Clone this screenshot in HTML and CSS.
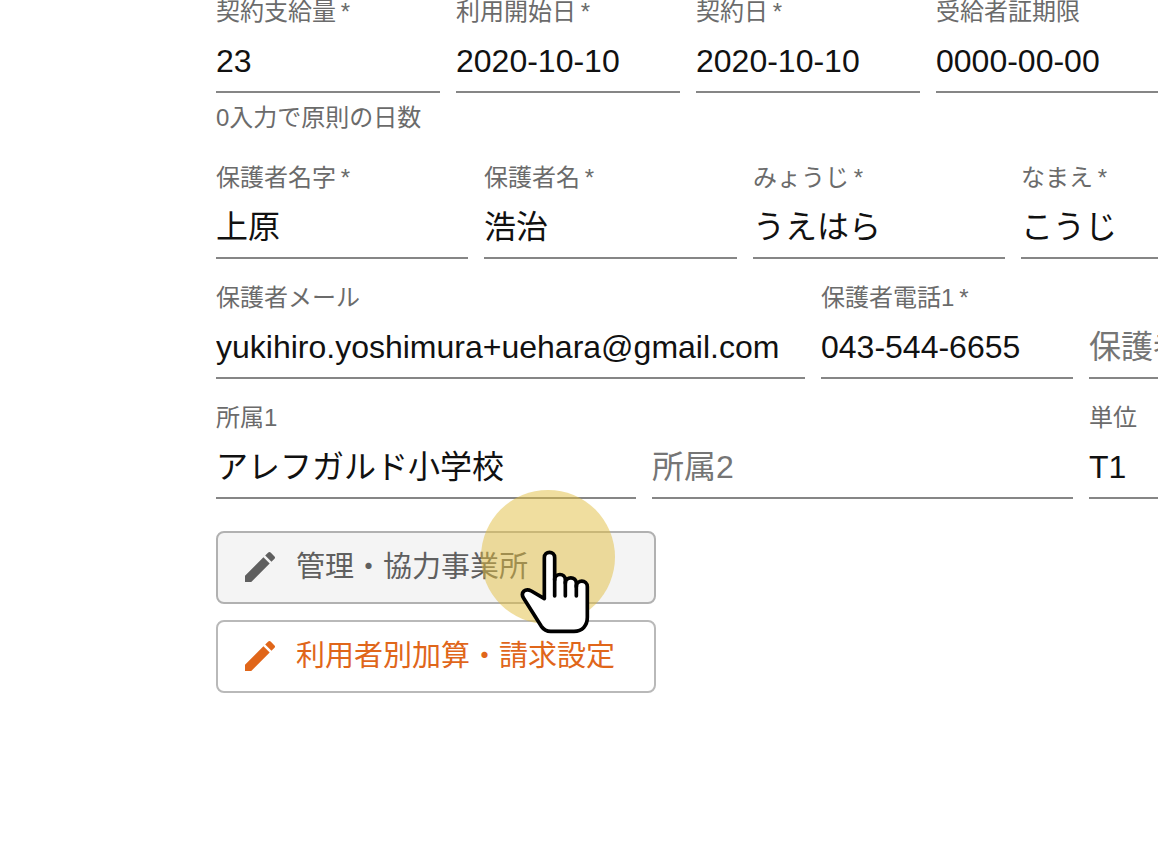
FILE: index.html
```html
<!DOCTYPE html>
<html lang="ja">
<head>
    <meta charset="UTF-8">
    <meta name="viewport" content="width=device-width, initial-scale=1.0">
    <title>利用者情報</title>
    <link rel="stylesheet" href="styles.css">
</head>
<body>
    <form class="user-form">
        <div class="row row-contract">
            <div class="field">
                <label for="volume">契約支給量&thinsp;*</label>
                <input type="text" id="volume" value="23">
                <p class="helper">0入力で原則の日数</p>
            </div>
            <div class="field">
                <label for="start-date">利用開始日&thinsp;*</label>
                <input type="text" id="start-date" value="2020-10-10">
            </div>
            <div class="field">
                <label for="contract-date">契約日&thinsp;*</label>
                <input type="text" id="contract-date" value="2020-10-10">
            </div>
            <div class="field">
                <label for="expire-date">受給者証期限</label>
                <input type="text" id="expire-date" value="0000-00-00">
            </div>
        </div>

        <div class="row row-guardian">
            <div class="field">
                <label for="last-name">保護者名字&thinsp;*</label>
                <input type="text" id="last-name" class="kanji" value="上原">
            </div>
            <div class="field">
                <label for="first-name">保護者名&thinsp;*</label>
                <input type="text" id="first-name" class="kanji" value="浩治">
            </div>
            <div class="field">
                <label for="last-kana">みょうじ&thinsp;*</label>
                <input type="text" id="last-kana" class="kanji" value="うえはら">
            </div>
            <div class="field">
                <label for="first-kana">なまえ&thinsp;*</label>
                <input type="text" id="first-kana" class="kanji" value="こうじ">
            </div>
        </div>

        <div class="row row-contact">
            <div class="field">
                <label for="mail">保護者メール</label>
                <input type="text" id="mail" value="yukihiro.yoshimura+uehara@gmail.com">
            </div>
            <div class="field">
                <label for="tel1">保護者電話1&thinsp;*</label>
                <input type="text" id="tel1" value="043-544-6655">
            </div>
            <div class="field field-empty">
                <input type="text" id="tel2" placeholder="保護者電話2" aria-label="保護者電話2">
            </div>
        </div>

        <div class="row row-belongs">
            <div class="field">
                <label for="belongs1">所属1</label>
                <input type="text" id="belongs1" class="kanji" value="アレフガルド小学校">
            </div>
            <div class="field field-empty">
                <input type="text" id="belongs2" placeholder="所属2" aria-label="所属2">
            </div>
            <div class="field">
                <label for="unit">単位</label>
                <input type="text" id="unit" value="T1">
            </div>
        </div>

        <div class="actions">
            <button type="button" class="btn btn-active">
                <svg class="icon" viewBox="0 0 24 24"><path d="M3 17.25V21h3.75L17.81 9.94l-3.75-3.75L3 17.25zM20.71 7.04c.39-.39.39-1.02 0-1.41l-2.34-2.34a.9959.9959 0 0 0-1.41 0l-1.83 1.83 3.75 3.75 1.83-1.83z"/></svg>
                管理・協力事業所
            </button>
            <button type="button" class="btn btn-orange">
                <svg class="icon" viewBox="0 0 24 24"><path d="M3 17.25V21h3.75L17.81 9.94l-3.75-3.75L3 17.25zM20.71 7.04c.39-.39.39-1.02 0-1.41l-2.34-2.34a.9959.9959 0 0 0-1.41 0l-1.83 1.83 3.75 3.75 1.83-1.83z"/></svg>
                利用者別加算・請求設定
            </button>
            <!-- click highlight and pointer -->
            <div class="pointer">
                <svg class="hand" viewBox="270 210 210 252">
                    <path d="M343 356V233C343 212 374 212 374 233V300C374 278 406 278 406 300V310C406 288 439 288 439 310V320C439 298 472 298 472 320V412C472 437 457 454 432 454H362C349 454 341 449 334 439L281 355C270 337 286 323 304 333Z"/>
                    <path d="M374 296V348M406 306V348M439 316V348"/>
                </svg>
            </div>
        </div>
    </form>
</body>
</html>
```
FILE: styles.css
```css
* {
    box-sizing: border-box;
}

body {
    margin: 0;
    background-color: #fff;
    color: #111;
    font-family: "Liberation Sans", "Noto Sans CJK JP", sans-serif;
    overflow-x: hidden;
}

.user-form {
    margin-top: -1px;
    padding-left: 216px;
}

.row {
    display: grid;
    column-gap: 16px;
    margin-bottom: 26px;
}

.row-contract {
    grid-template-columns: repeat(3, 224px) 1fr;
    margin-bottom: 36px;
}

.row-guardian {
    grid-template-columns: 252px 253px 252px 1fr;
}

.row-contact {
    grid-template-columns: 589px 252px 1fr;
}

.row-belongs {
    grid-template-columns: 420px 421px 1fr;
    margin-bottom: 32px;
}

.field {
    display: flex;
    flex-direction: column;
    min-width: 0;
}

.field label {
    height: 24px;
    font-size: 24px;
    line-height: 26px;
    white-space: nowrap;
    color: #6b6b6b;
}

.field-empty {
    padding-top: 24px;
}

.field input {
    width: 100%;
    height: 70px;
    padding: 8px 0 0;
    border: none;
    border-bottom: 2px solid #868686;
    border-radius: 0;
    background: transparent;
    font-family: inherit;
    font-size: 32px;
    color: #111;
    outline: none;
}

.field .kanji {
    padding-top: 2px;
    font-family: "Noto Sans CJK JP", sans-serif;
}

.field input::placeholder {
    color: #757575;
    opacity: 1;
}

.helper {
    height: 24px;
    margin: 12px 0 0;
    font-size: 24px;
    line-height: 26px;
    white-space: nowrap;
    color: #6b6b6b;
}

.actions {
    position: relative;
    display: flex;
    flex-direction: column;
    gap: 16px;
    width: 440px;
}

.btn {
    display: flex;
    align-items: center;
    gap: 16px;
    height: 73px;
    padding: 0 22px 2px;
    border: 2px solid #b9b9b9;
    border-radius: 8px;
    background: #fff;
    font-family: inherit;
    font-size: 29px;
    line-height: 28px;
    white-space: nowrap;
    cursor: pointer;
}

.btn-active {
    background: #f4f4f4;
    border-color: #b1b1b1;
    color: #5f5f5f;
}

.btn-orange {
    color: #e0661a;
}

.icon {
    width: 40px;
    height: 40px;
    fill: currentColor;
}

.pointer {
    position: absolute;
    top: -41px;
    left: 265px;
    width: 134px;
    height: 134px;
    border-radius: 50%;
    background: rgba(225, 190, 64, 0.5);
    pointer-events: none;
}

.hand {
    position: absolute;
    top: 60px;
    left: 39px;
    width: 70px;
    height: 84px;
    fill: #fff;
    stroke: #000;
    stroke-width: 11;
    stroke-linecap: round;
    stroke-linejoin: round;
}
```
